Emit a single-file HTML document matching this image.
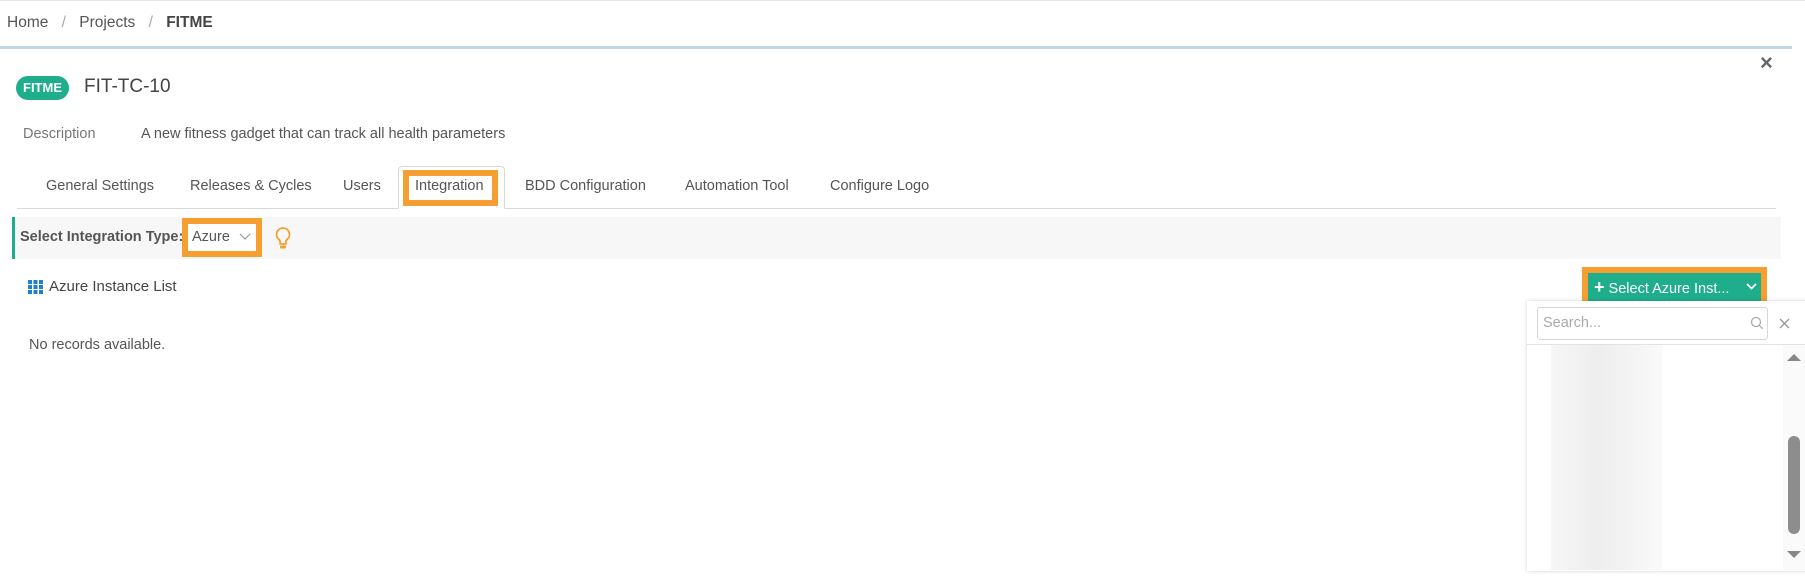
<!DOCTYPE html>
<html><head><meta charset="utf-8"><style>
*{margin:0;padding:0;box-sizing:border-box}
body{width:1805px;height:588px;background:#fff;font-family:"Liberation Sans",sans-serif;color:#555;position:relative;overflow:hidden}
.a{position:absolute;white-space:nowrap}
</style></head><body>
<div class="a" style="left:0;top:0;width:1805px;height:1px;background:#e6e6e6"></div>
<div class="a" style="left:7px;top:14px;font-size:15.5px;color:#555">Home <span style="color:#aaa;margin:0 9px">/</span> Projects <span style="color:#aaa;margin:0 9px">/</span> <b style="color:#444">FITME</b></div>
<div class="a" style="left:0;top:46px;width:1792px;height:3px;background:#c3d8e4"></div>
<div class="a" style="left:1760px;top:50px;font-size:22px;font-weight:bold;color:#666">×</div>
<div class="a" style="left:16px;top:76px;width:53px;height:24px;border-radius:12px;background:#1fae8c;color:#fff;font-size:13px;font-weight:bold;line-height:24px;text-align:center">FITME</div>
<div class="a" style="left:84px;top:76px;font-size:19px;color:#444">FIT-TC-10</div>
<div class="a" style="left:23px;top:126px;font-size:14.5px;color:#777">Description</div>
<div class="a" style="left:141px;top:126px;font-size:14.5px;color:#555">A new fitness gadget that can track all health parameters</div>
<div class="a" style="left:17px;top:208px;width:1759px;height:1px;background:#d8d8d8"></div>
<div class="a" style="left:398px;top:166px;width:107px;height:43px;border:1px solid #d8d8d8;border-bottom:1px solid #fff;border-radius:4px 4px 0 0;background:#fff"></div>
<div class="a" style="left:403px;top:170px;width:95px;height:36px;border:6px solid #f59e32"></div>
<div class="a" style="top:178px;font-size:14.5px;color:#555;left:0;width:100%">
<span class="a" style="left:46px">General Settings</span>
<span class="a" style="left:190px">Releases &amp; Cycles</span>
<span class="a" style="left:343px">Users</span>
<span class="a" style="left:415px">Integration</span>
<span class="a" style="left:525px">BDD Configuration</span>
<span class="a" style="left:685px">Automation Tool</span>
<span class="a" style="left:830px">Configure Logo</span>
</div>
<div class="a" style="left:12px;top:217px;width:1769px;height:42px;background:#f7f7f7;border-left:3px solid #1fae8c"></div>
<div class="a" style="left:20px;top:229px;font-size:14.5px;font-weight:bold;color:#555">Select Integration Type:</div>
<div class="a" style="left:182px;top:218px;width:80px;height:39px;border:6px solid #f59e32;background:#fff"></div>
<div class="a" style="left:192px;top:229px;font-size:14.5px;color:#555">Azure</div>
<svg class="a" style="left:239px;top:233px" width="12" height="8"><path d="M1 1l5 5 5-5" fill="none" stroke="#999" stroke-width="1.2"/></svg>
<svg class="a" style="left:274px;top:226px" width="18" height="26"><path d="M9 2a6.5 6.5 0 0 0-4 11.6c.8.7 1.2 1.6 1.2 2.6V18h5.6v-1.8c0-1 .4-1.9 1.2-2.6A6.5 6.5 0 0 0 9 2z" fill="none" stroke="#f59e32" stroke-width="1.8"/><rect x="6" y="19.5" width="6" height="3" rx="1" fill="#f59e32"/></svg>
<svg class="a" style="left:28px;top:280px" width="15" height="14"><g fill="#1f7fd0"><rect x="0" y="0" width="4" height="4"/><rect x="5.5" y="0" width="4" height="4"/><rect x="11" y="0" width="4" height="4"/><rect x="0" y="5" width="4" height="4"/><rect x="5.5" y="5" width="4" height="4"/><rect x="11" y="5" width="4" height="4"/><rect x="0" y="10" width="4" height="4"/><rect x="5.5" y="10" width="4" height="4"/><rect x="11" y="10" width="4" height="4"/></g></svg>
<div class="a" style="left:49px;top:278px;font-size:15px;color:#444">Azure Instance List</div>
<div class="a" style="left:29px;top:337px;font-size:14.5px;color:#555">No records available.</div>
<div class="a" style="left:1582px;top:267px;width:185px;height:39px;background:#f59e32"></div>
<div class="a" style="left:1588px;top:273px;width:173px;height:28px;background:#1fae8c;color:#fff;font-size:14.5px;line-height:28px;padding-left:6px"><b style="font-size:18px">+</b> Select Azure Inst...</div>
<svg class="a" style="left:1746px;top:283px" width="11" height="8"><path d="M1 1l4.5 4.5L10 1" fill="none" stroke="#fff" stroke-width="1.8"/></svg>
<div class="a" style="left:1527px;top:301px;width:290px;height:270px;background:#fff;box-shadow:0 0 4px rgba(0,0,0,.18)"></div>
<div class="a" style="left:1537px;top:307px;width:231px;height:33px;border:1px solid #d6d6d6;border-radius:3px;font-size:14.5px;color:#aaa;line-height:31px;padding-left:5px">Search...</div>
<svg class="a" style="left:1750px;top:316px" width="14" height="14"><circle cx="6" cy="6" r="4.5" fill="none" stroke="#aaa" stroke-width="1.3"/><path d="M9.3 9.3l3.5 3.5" stroke="#aaa" stroke-width="1.3"/></svg>
<svg class="a" style="left:1779px;top:318px" width="11" height="11"><path d="M1 1l9 9M10 1l-9 9" stroke="#999" stroke-width="1.3"/></svg>
<div class="a" style="left:1527px;top:344px;width:278px;height:1px;background:#e2e2e2"></div>
<div class="a" style="left:1551px;top:345px;width:112px;height:225px;background:linear-gradient(90deg,#f6f6f6,#eee 40%,#f5f5f5 80%,#fafafa)"></div>
<div class="a" style="left:1783px;top:345px;width:22px;height:225px;background:#fafafa"></div>
<svg class="a" style="left:1786px;top:352px" width="16" height="10"><path d="M1 9L8 2l7 7z" fill="#888"/></svg>
<div class="a" style="left:1788px;top:436px;width:12px;height:98px;border-radius:6px;background:#8d8d8d"></div>
<svg class="a" style="left:1786px;top:550px" width="16" height="10"><path d="M1 1l7 7 7-7z" fill="#888"/></svg>
</body></html>
